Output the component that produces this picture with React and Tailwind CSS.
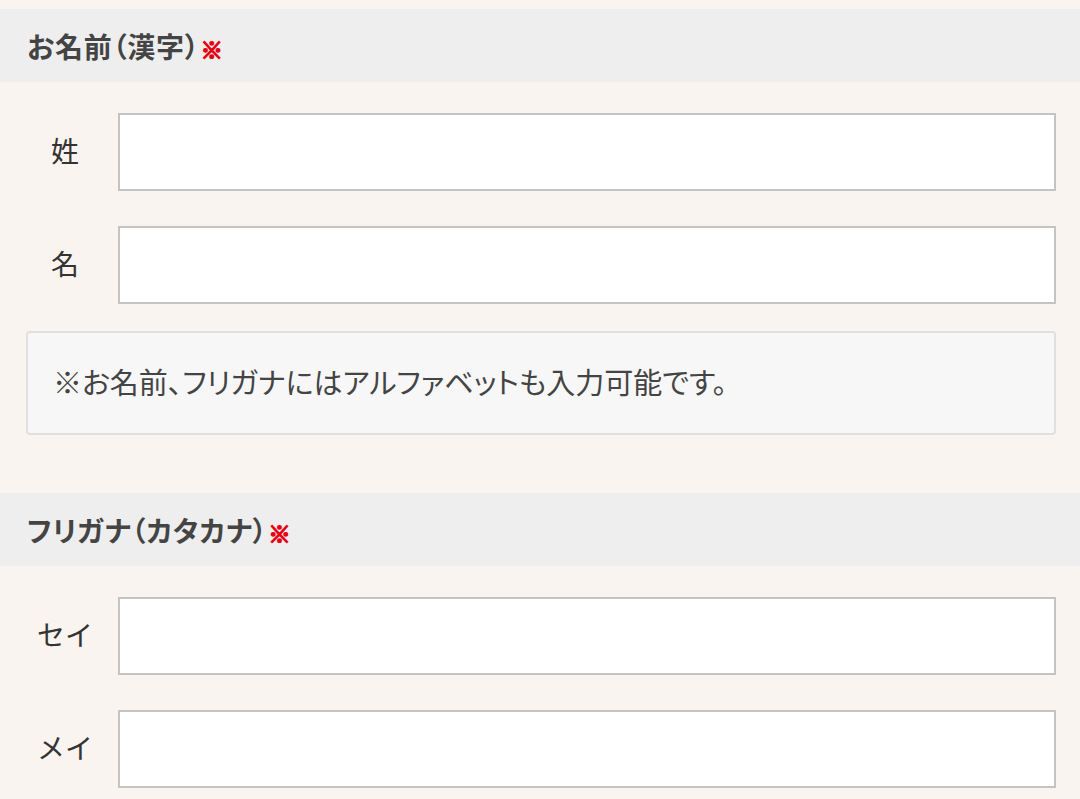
import React from 'react';

const font = { fontFamily: '"Noto Sans CJK JP", "Noto Sans", sans-serif' };

function SectionHeader({ children }) {
  return (
    <div className="h-[73px] bg-[#eeeeee] flex items-center pl-[27px]">
      <h2 className="text-[28px] font-bold text-[#444444] [font-feature-settings:'palt'] tracking-[0.8px] leading-none">
        {children}
        <span className="text-[#e60012] text-[22px] font-bold ml-[1px] [-webkit-text-stroke:1.6px_#e60012]">※</span>
      </h2>
    </div>
  );
}

function FieldRow({ label, className = '' }) {
  return (
    <div className={`flex items-center pr-[24px] ${className}`}>
      <label className="w-[118px] pl-[12px] pb-[4px] text-center text-[28px] text-[#333333] shrink-0">{label}</label>
      <input
        type="text"
        className="flex-1 h-[78px] bg-white border-2 border-[#c4c4c4] outline-none px-3 text-[24px]"
      />
    </div>
  );
}

export default function App() {
  return (
    <div className="min-h-screen bg-[#f9f4f0] pt-[9px]" style={font}>
      {/* 漢字 */}
      <SectionHeader>お名前（漢字）</SectionHeader>
      <FieldRow label="姓" className="mt-[31px]" />
      <FieldRow label="名" className="mt-[35px]" />
      <div className="mt-[27px] ml-[26px] mr-[24px] h-[104px] bg-[#f7f7f7] border-2 border-[#e0e0e0] rounded-[4px] flex items-center pl-[25px]">
        <p className="text-[29px] text-[#444444] [font-feature-settings:'palt'] pb-[3px]">※お名前、フリガナにはアルファベットも入力可能です。</p>
      </div>

      {/* カタカナ */}
      <div className="mt-[58px]">
        <SectionHeader>フリガナ（カタカナ）</SectionHeader>
      </div>
      <FieldRow label="セイ" className="mt-[31px]" />
      <FieldRow label="メイ" className="mt-[35px]" />
    </div>
  );
}
